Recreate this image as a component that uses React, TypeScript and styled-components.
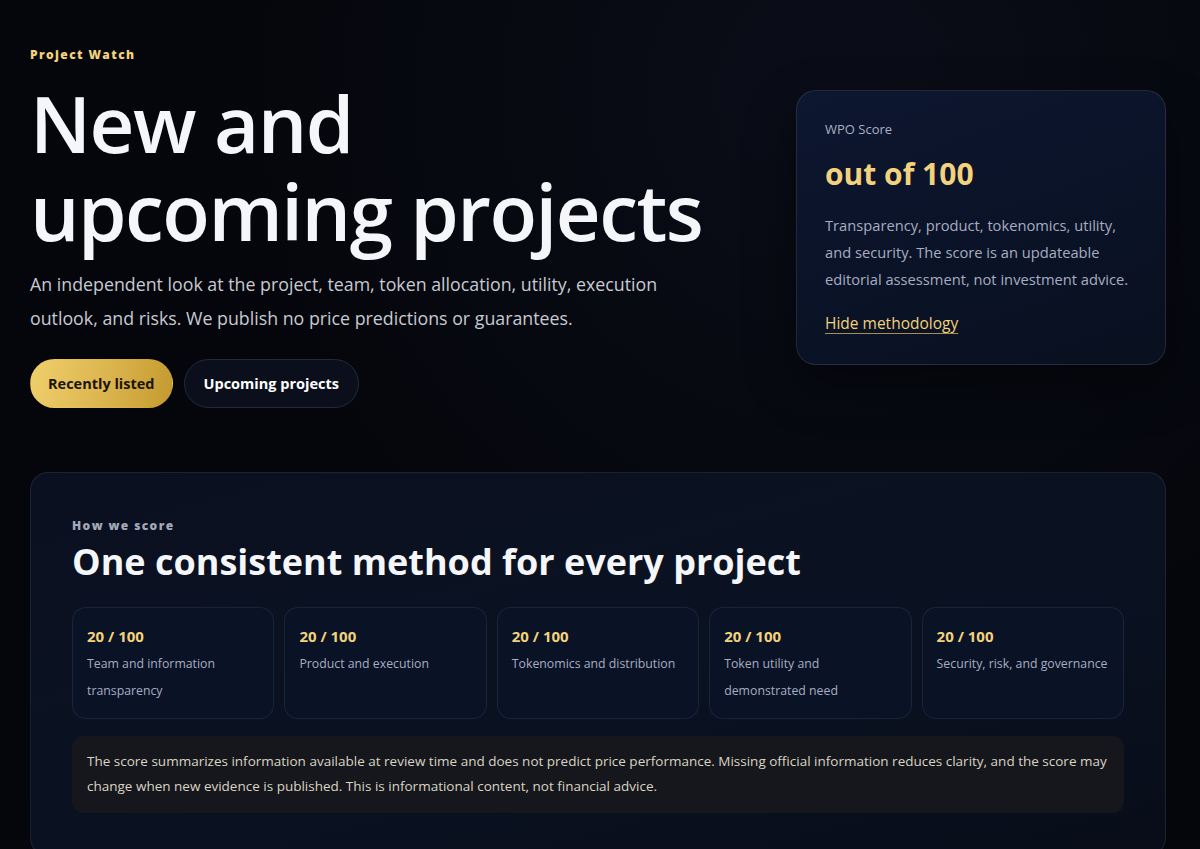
import styled, { createGlobalStyle } from 'styled-components';

const GlobalStyle = createGlobalStyle`
  html, body {
    margin: 0;
    padding: 0;
    background: #05060b;
  }
  body {
    font-family: "Open Sans", "Noto Sans", Arial, sans-serif;
    color: #f4f5f8;
    -webkit-font-smoothing: antialiased;
  }
`;

const Page = styled.div`
  min-height: 849px;
  padding: 46px 34px 40px 30px;
  background: radial-gradient(circle at 70% 10%, #0a0d18 0%, #05060b 55%);
`;

const Hero = styled.section`
  display: grid;
  grid-template-columns: 1fr 370px;
  align-items: center;
  gap: 40px;
`;

const HeroText = styled.div`
  display: flex;
  flex-direction: column;
`;

const Eyebrow = styled.div<{ $muted?: boolean }>`
  font-size: 12px;
  font-weight: 800;
  letter-spacing: 1.4px;
  color: ${p => (p.$muted ? '#a3a9b8' : '#f2d27c')};
`;

const Title = styled.h1`
  margin: 16px 0 0;
  font-size: 78px;
  font-weight: 600;
  line-height: 88px;
  letter-spacing: -1.5px;
  color: #f5f6f9;
`;

const Lead = styled.p`
  margin: 12px 0 0;
  max-width: 650px;
  font-size: 17.8px;
  line-height: 34px;
  color: #c7cad3;
`;

const Actions = styled.div`
  display: flex;
  gap: 11px;
  margin-top: 24px;
`;

const PillButton = styled.button<{ $primary?: boolean }>`
  height: 49px;
  padding: 0 ${p => (p.$primary ? 17 : 19)}px;
  border-radius: 25px;
  font-family: inherit;
  font-size: 14.5px;
  font-weight: 700;
  cursor: pointer;
  border: 1px solid ${p => (p.$primary ? 'transparent' : '#232a3a')};
  color: ${p => (p.$primary ? '#1a1406' : '#ffffff')};
  background: ${p =>
    p.$primary
      ? 'linear-gradient(100deg, #efcf6b 0%, #d9b14a 60%, #c29a2e 100%)'
      : '#0b0f1c'};
`;

const ScoreCard = styled.aside`
  padding: 29px 28px 30px;
  border-radius: 20px;
  border: 1px solid rgba(255, 255, 255, 0.1);
  background: linear-gradient(160deg, #0d1730 0%, #0a1226 60%, #09101f 100%);
  box-shadow: 0 20px 50px rgba(0, 0, 0, 0.45);
`;

const CardLabel = styled.div`
  font-size: 13px;
  color: #a9b0c2;
`;

const ScoreHeading = styled.div`
  margin-top: 15px;
  font-size: 30px;
  font-weight: 700;
  color: #f2d27c;
`;

const CardText = styled.p`
  margin: 18px 0 0;
  font-size: 14.7px;
  line-height: 27px;
  color: #a6adc0;
`;

const TextLink = styled.a`
  display: inline-block;
  margin-top: 19px;
  font-size: 15.5px;
  color: #f2d27c;
  text-decoration: underline;
  text-decoration-color: #a88f4e;
  text-underline-offset: 4px;
  cursor: pointer;
`;

const Method = styled.section`
  margin-top: 64px;
  padding: 44px 41px 42px;
  border-radius: 18px;
  border: 1px solid rgba(255, 255, 255, 0.08);
  background: linear-gradient(165deg, #0b1020 0%, #0a1222 50%, #080d19 100%);
`;

const SectionTitle = styled.h2`
  margin: 5px 0 0;
  font-size: 36px;
  font-weight: 700;
  line-height: 46px;
  color: #f5f6f9;
`;

const CriteriaGrid = styled.div`
  display: grid;
  grid-template-columns: repeat(5, 1fr);
  gap: 10px;
  margin-top: 22px;
`;

const Criterion = styled.div`
  min-height: 112px;
  box-sizing: border-box;
  padding: 18px 14px 10px;
  border-radius: 14px;
  border: 1px solid rgba(120, 140, 180, 0.14);
  background: #0a1226;
`;

const Points = styled.div`
  font-size: 15px;
  font-weight: 700;
  color: #f2d27c;
`;

const CriterionName = styled.div`
  margin-top: 4px;
  font-size: 12.3px;
  line-height: 27px;
  color: #a6adc0;
`;

const Disclaimer = styled.p`
  margin: 17px 0 0;
  padding: 13px 15px 14px;
  border-radius: 12px;
  background: #15171c;
  font-size: 13.5px;
  line-height: 25px;
  color: #d9d4c4;
`;

const criteria = [
  'Team and information transparency',
  'Product and execution',
  'Tokenomics and distribution',
  'Token utility and demonstrated need',
  'Security, risk, and governance',
];

const App = () => (
  <>
    <GlobalStyle />
    <Page>
      <Hero>
        <HeroText>
          <Eyebrow>Project Watch</Eyebrow>
          <Title>
            New and
            <br />
            upcoming projects
          </Title>
          <Lead>
            An independent look at the project, team, token allocation, utility, execution
            outlook, and risks. We publish no price predictions or guarantees.
          </Lead>
          <Actions>
            <PillButton $primary>Recently listed</PillButton>
            <PillButton>Upcoming projects</PillButton>
          </Actions>
        </HeroText>
        <ScoreCard>
          <CardLabel>WPO Score</CardLabel>
          <ScoreHeading>out of 100</ScoreHeading>
          <CardText>
            Transparency, product, tokenomics, utility, and security. The score is an
            updateable editorial assessment, not investment advice.
          </CardText>
          <TextLink>Hide methodology</TextLink>
        </ScoreCard>
      </Hero>

      <Method>
        <Eyebrow $muted>How we score</Eyebrow>
        <SectionTitle>One consistent method for every project</SectionTitle>
        <CriteriaGrid>
          {criteria.map(name => (
            <Criterion key={name}>
              <Points>20 / 100</Points>
              <CriterionName>{name}</CriterionName>
            </Criterion>
          ))}
        </CriteriaGrid>
        <Disclaimer>
          The score summarizes information available at review time and does not predict price
          performance. Missing official information reduces clarity, and the score may change
          when new evidence is published. This is informational content, not financial advice.
        </Disclaimer>
      </Method>
    </Page>
  </>
);

export default App;
